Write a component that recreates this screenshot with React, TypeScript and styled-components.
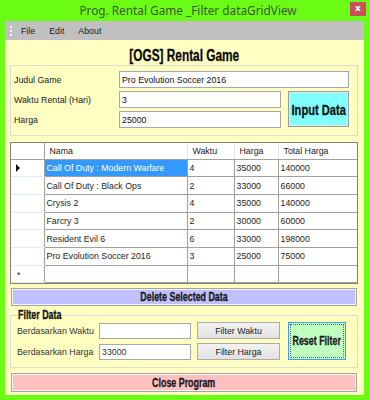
import React from 'react'
import styled, { createGlobalStyle } from 'styled-components'

const GlobalStyle = createGlobalStyle`
  html, body {
    margin: 0;
    padding: 0;
    background: #6bfc16;
  }
  * {
    box-sizing: border-box;
  }
`;

interface Row {
  nama: string;
  waktu: number;
  harga: number;
}

const rows: Row[] = [
  { nama: 'Call Of Duty : Modern Warfare', waktu: 4, harga: 35000 },
  { nama: 'Call Of Duty : Black Ops', waktu: 2, harga: 33000 },
  { nama: 'Crysis 2', waktu: 4, harga: 35000 },
  { nama: 'Farcry 3', waktu: 2, harga: 30000 },
  { nama: 'Resident Evil 6', waktu: 6, harga: 33000 },
  { nama: 'Pro Evolution Soccer 2016', waktu: 3, harga: 25000 },
];

export default function App() {
  return (
    <>
      <GlobalStyle />
      <Window>
        <TitleBar>
          <span />
          <TitleText>Prog. Rental Game _Filter dataGridView</TitleText>
          <CloseButton>x</CloseButton>
        </TitleBar>
        <Client>
          <MenuStrip>
            <Grip />
            <MenuItem>File</MenuItem>
            <MenuItem>Edit</MenuItem>
            <MenuItem>About</MenuItem>
          </MenuStrip>
          <Body>
            <Heading><Narrow>[OGS] Rental Game</Narrow></Heading>
            <InputGroup>
              <Label>Judul Game</Label>
              <TextBox $wide value="Pro Evolution Soccer 2016" readOnly />
              <Label>Waktu Rental (Hari)</Label>
              <TextBox value="3" readOnly />
              <InputButton><Narrow>Input Data</Narrow></InputButton>
              <Label>Harga</Label>
              <TextBox value="25000" readOnly />
            </InputGroup>

            <GridFrame>
              <Table>
                <colgroup>
                  <col style={{ width: 33 }} />
                  <col style={{ width: 143 }} />
                  <col style={{ width: 47 }} />
                  <col style={{ width: 44 }} />
                  <col />
                </colgroup>
                <thead>
                  <tr>
                    <HeadCell />
                    <HeadCell>Nama</HeadCell>
                    <HeadCell>Waktu</HeadCell>
                    <HeadCell>Harga</HeadCell>
                    <HeadCell>Total Harga</HeadCell>
                  </tr>
                </thead>
                <tbody>
                  {rows.map((row, index) => (
                    <tr key={index}>
                      <RowHeader>{index === 0 && <Arrow />}</RowHeader>
                      <Cell $selected={index === 0}>{row.nama}</Cell>
                      <Cell>{row.waktu}</Cell>
                      <Cell>{row.harga}</Cell>
                      <Cell>{row.waktu * row.harga}</Cell>
                    </tr>
                  ))}
                  <tr>
                    <RowHeader><Star>*</Star></RowHeader>
                    <Cell />
                    <Cell />
                    <Cell />
                    <Cell />
                  </tr>
                </tbody>
              </Table>
            </GridFrame>

            <WideButton $color="#c0c0ff"><Narrow>Delete Selected Data</Narrow></WideButton>

            <FilterGroup>
              <Legend><Narrow $left>Filter Data</Narrow></Legend>
              <FilterGrid>
                <FilterLabel>Berdasarkan Waktu</FilterLabel>
                <FilterBox value="" readOnly />
                <GrayButton>Filter Waktu</GrayButton>
                <ResetButton><Narrow>Reset Filter</Narrow></ResetButton>
                <FilterLabel>Berdasarkan Harga</FilterLabel>
                <FilterBox value="33000" readOnly />
                <GrayButton>Filter Harga</GrayButton>
              </FilterGrid>
            </FilterGroup>

            <WideButton $color="#ffc0c0" $tall><Narrow>Close Program</Narrow></WideButton>
          </Body>
        </Client>
      </Window>
    </>
  )
}

const textFont = `"Liberation Sans", Arial, sans-serif`;
const boldFont = `"Liberation Sans", Arial, sans-serif`;

const Window = styled.div`
  width: 370px;
  height: 400px;
  background: #6bfc16;
  display: flex;
  flex-direction: column;
  padding: 0 6px 5px 5px;
  font-family: ${textFont};
  font-size: 8.8px;
  color: #1a1a1a;
`;

const TitleBar = styled.div`
  height: 21px;
  display: grid;
  grid-template-columns: 1fr auto 1fr;
  align-items: start;
  margin-right: -5px;
`;

const TitleText = styled.span`
  font-family: "Noto Sans", "Open Sans", sans-serif;
  font-size: 11.8px;
  line-height: 20px;
  color: #3e5530;
  padding-left: 2px;
`;

const CloseButton = styled.span`
  justify-self: end;
  margin: 2px 3px 0 0;
  width: 16px;
  height: 14px;
  background: #c8505a;
  color: #fff;
  font-family: "DejaVu Sans", sans-serif;
  font-weight: bold;
  font-size: 9px;
  line-height: 13px;
  text-align: center;
`;

const Client = styled.div`
  flex: 1;
  background: #ffffc2;
  display: flex;
  flex-direction: column;
`;

const MenuStrip = styled.div`
  height: 19px;
  background: #c0c0c0;
  display: flex;
  align-items: center;
  padding-left: 5px;
`;

const Grip = styled.span`
  width: 2px;
  height: 10px;
  margin-right: 5px;
  background: repeating-linear-gradient(to bottom, #f4f4f4 0 2px, transparent 2px 4px);
`;

const MenuItem = styled.span`
  padding: 0 8px 0 4px;
  margin-right: 2px;
  color: #202020;
`;

/* bold condensed caption, the app's narrow display font */
const Narrow = styled.span<{ $left?: boolean }>`
  display: inline-block;
  font-family: ${boldFont};
  font-weight: bold;
  white-space: nowrap;
  -webkit-text-stroke: 0.3px currentColor;
  transform: scaleX(0.74);
  transform-origin: ${p => (p.$left ? 'left center' : 'center')};
`;

const Body = styled.div`
  display: flex;
  flex-direction: column;
  padding: 0 6px 0 6px;
`;

const Heading = styled.div`
  height: 25px;
  line-height: 31px;
  text-align: center;
  font-size: 16px;
  color: #0a0a0a;
`;

const InputGroup = styled.div`
  width: 348px;
  margin-left: -1px;
  border: 1px solid #dcdccc;
  padding: 5px 9px 7px 3px;
  display: grid;
  grid-template-columns: 98px 162px 61px;
  column-gap: 7px;
  row-gap: 3px;
  grid-auto-rows: 17px;
  align-items: center;
`;

const Label = styled.span`
  color: #222;
  white-space: nowrap;
`;

const TextBox = styled.input<{ $wide?: boolean }>`
  grid-column: ${p => (p.$wide ? 'span 2' : 'auto')};
  height: 17px;
  width: 100%;
  border: 1px solid #a8a8a8;
  background: #fff;
  font-family: ${textFont};
  font-size: 8.8px;
  color: #111;
  padding: 0 0 0 2px;
  outline: none;
`;

const InputButton = styled.div`
  grid-row: span 2;
  height: 36px;
  align-self: start;
  background: #80ffff;
  border: 1px solid #9c9c9c;
  box-shadow: inset 0 0 0 1px #e8e8e8;
  display: flex;
  align-items: center;
  justify-content: center;
  font-size: 15px;
  color: #111;
`;

const GridFrame = styled.div`
  margin-top: 6px;
  margin-left: -1px;
  width: 348px;
  border: 1px solid #808080;
  background: #ababab;
`;

const Table = styled.table`
  width: 100%;
  border-collapse: collapse;
  table-layout: fixed;
  background: #fff;
`;

const HeadCell = styled.th`
  height: 16px;
  padding: 0 0 0 5px;
  text-align: left;
  font-weight: normal;
  color: #222;
  border-left: 1px solid #e4e4e4;
  border-bottom: 1px solid #a0a0a0;
  white-space: nowrap;
  &:first-child {
    border-left: none;
    border-right: 1px solid #a0a0a0;
  }
`;

const RowHeader = styled.td`
  height: 17.7px;
  padding: 0;
  border-right: 1px solid #a0a0a0;
  border-bottom: 1px solid #e4ecf4;
`;

const Arrow = styled.span`
  display: block;
  margin-left: 5px;
  width: 0;
  height: 0;
  border-top: 4px solid transparent;
  border-bottom: 4px solid transparent;
  border-left: 4px solid #111;
`;

const Star = styled.span`
  display: block;
  padding-left: 6px;
  font-size: 9px;
  line-height: 12px;
  padding-top: 3px;
`;

const Cell = styled.td<{ $selected?: boolean }>`
  height: 17.7px;
  padding: 0 0 0 2px;
  border-right: 1px solid #a0a0a0;
  border-bottom: 1px solid #a0a0a0;
  white-space: nowrap;
  overflow: hidden;
  background: ${p => (p.$selected ? '#3399ff' : '#fff')};
  color: ${p => (p.$selected ? '#fff' : '#1e1e1e')};
  &:last-child {
    border-right: none;
  }
`;

const WideButton = styled.div<{ $color: string; $tall?: boolean }>`
  margin-top: ${p => (p.$tall ? '5px' : '4px')};
  width: 346px;
  height: ${p => (p.$tall ? '19px' : '18px')};
  background: ${p => p.$color};
  border: 1px solid #a4a4a4;
  box-shadow: inset 0 0 0 1px #f4f4f4;
  display: flex;
  align-items: center;
  justify-content: center;
  font-size: 12px;
  color: #1a1a1a;
`;

const FilterGroup = styled.fieldset`
  margin: 4px 0 0 -1px;
  width: 348px;
  border: 1px solid #dcdccc;
  padding: 1px 9px 7px 6px;
`;

const Legend = styled.legend`
  padding: 0 2px 0 1px;
  margin-left: 0;
  width: 42px;
  font-size: 12px;
  color: #111;
  line-height: 11px;
`;

const FilterGrid = styled.div`
  display: grid;
  grid-template-columns: 76px 92px 83px 60px;
  column-gap: 6px;
  row-gap: 4px;
  grid-auto-rows: 17px;
  align-items: center;
  & > :nth-child(4) {
    margin-left: 2px;
  }
`;

const FilterLabel = styled.span`
  color: #333;
  white-space: nowrap;
`;

const FilterBox = styled.input`
  height: 16px;
  width: 100%;
  border: 1px solid #a8a8a8;
  background: #fff;
  font-family: ${textFont};
  font-size: 8.8px;
  color: #333;
  padding: 0 0 0 2px;
  outline: none;
`;

const GrayButton = styled.div`
  height: 17px;
  border: 1px solid #acacac;
  background: linear-gradient(#f2f2f2, #e2e2e2);
  display: flex;
  align-items: center;
  justify-content: center;
  color: #222;
`;

const ResetButton = styled.div`
  grid-row: span 2;
  height: 38px;
  background: #c0ffc0;
  border: 1px solid #3c9cf0;
  outline: 1px dotted #666;
  outline-offset: -3px;
  display: flex;
  align-items: center;
  justify-content: center;
  font-size: 12px;
  color: #1a1a1a;
`;
